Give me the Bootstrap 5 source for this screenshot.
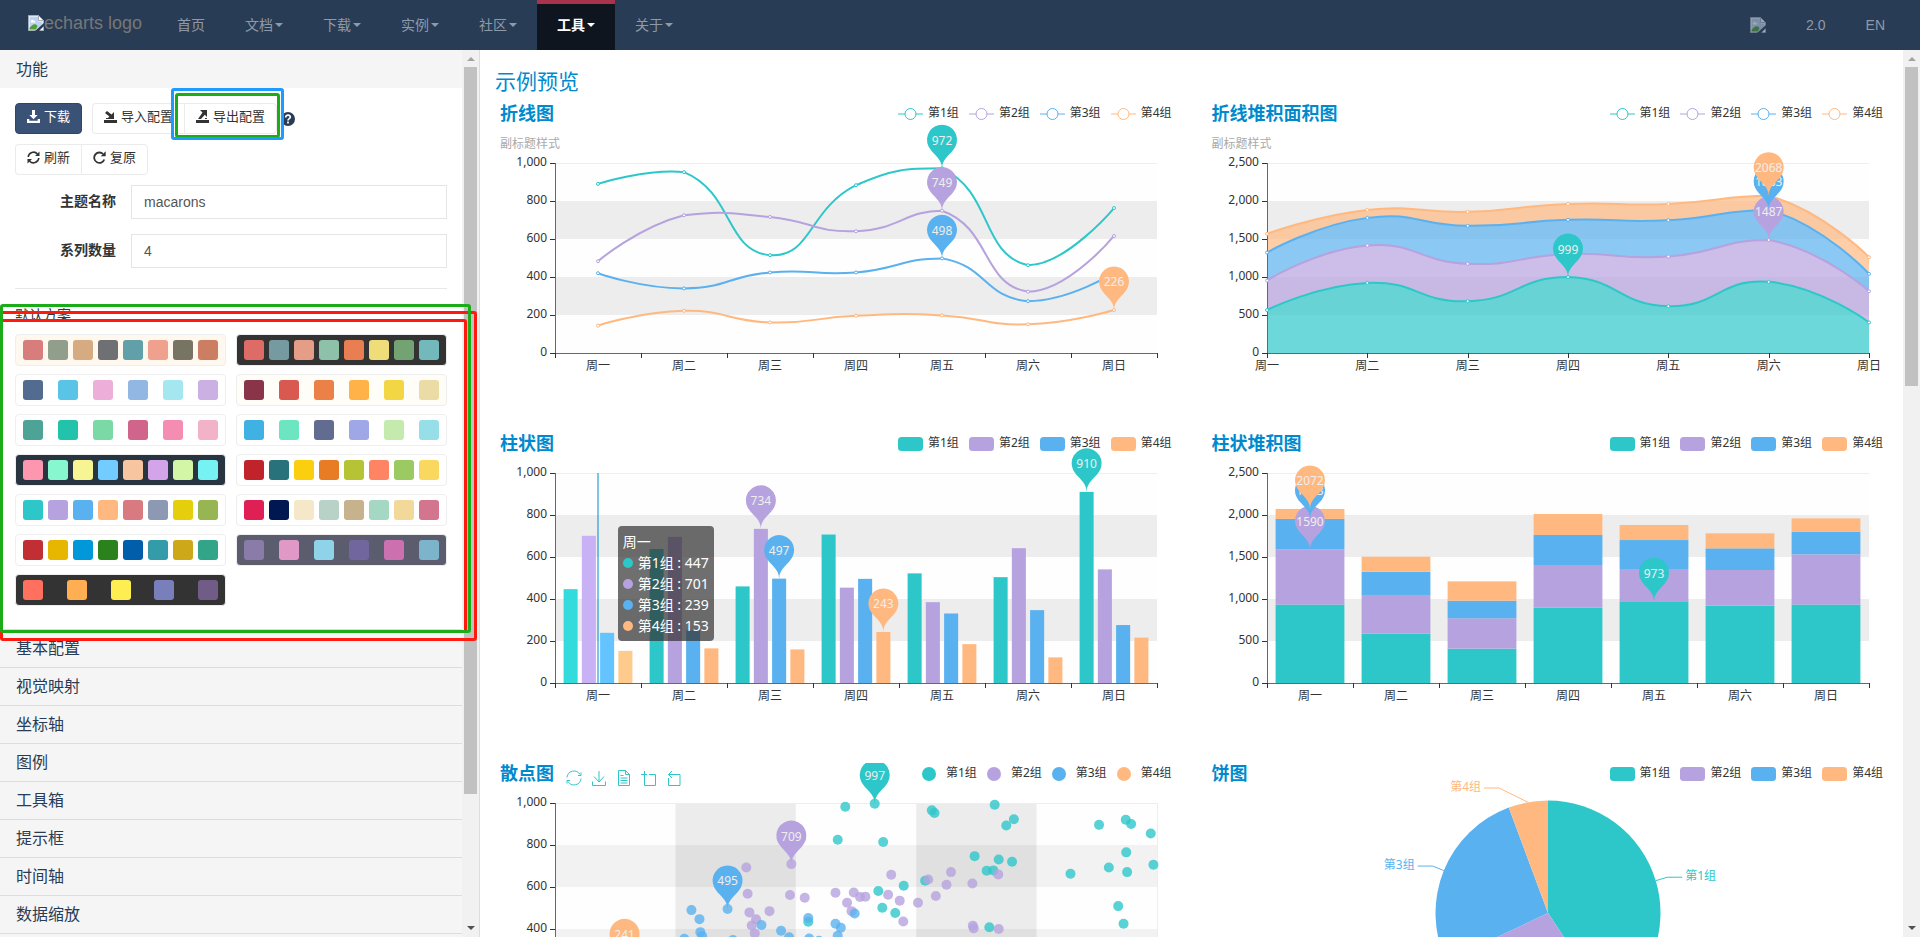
<!DOCTYPE html>
<html lang="zh-CN">
<head>
<meta charset="utf-8">
<meta name="viewport" content="width=device-width, initial-scale=1">
<title>主题编辑器 - ECharts</title>
<link href="https://cdn.jsdelivr.net/npm/bootstrap@5.3.0/dist/css/bootstrap.min.css" rel="stylesheet">
<style>
:root { --navy: #293c55; --accent: #008acd; --edge: #eee; }
body { font: 14px/20px "Liberation Sans", "Noto Sans CJK SC", sans-serif; color: #333; overflow: hidden; }
button, input { font: inherit; }

/* top bar */
.topbar { background: var(--navy); height: 50px; padding: 0 15px 0 28px; color: #777; }
.brand { font-size: 18px; line-height: 20px; color: #777; width: 129px; margin-top: -4px; }
.topbar .nav-link { color: #8f9aa8; padding: 15px 20px; line-height: 20px; height: 50px; display: flex; align-items: center; }
.topbar .nav-link.current { background: #0e151f; color: #fff; border-top: 4px solid #a9334c; padding: 11px 20px 15px; font-weight: bold; }
.tri::after { content: ""; border: 4px solid transparent; border-top-color: currentColor; border-bottom: 0; margin-left: 2px; }

/* left pane */
.work { min-height: 0; }
.side { width: 25%; border-right: 1px solid #ddd; }
.side-body { min-width: 0; overflow: hidden; }
.sect { background: #f5f5f5; color: var(--navy); font-size: 16px; line-height: 37px; padding: 0 16px; border: 0; border-bottom: 1px solid #ddd; text-align: left; height: 38px; flex: none; }
.sect-open { border-bottom: 0; padding-top: 1px; }
.panel { padding: 15px 15px 23px; border-bottom: 1px solid #ddd; }
.tool-row { gap: 10px; margin-bottom: 10px; }
.tool { font-size: 13px; line-height: 19px; height: 31px; padding: 0 11px 5px; border: 1px solid #ebebeb; background: #fff; color: #333; border-radius: 4px; display: inline-flex; align-items: center; gap: 4px; white-space: nowrap; }
.tool svg { width: 13px; height: 13px; }
.tool.main { background: #3a5276; border-color: #2f4566; color: #fff; }
.pair .tool:first-child { border-radius: 4px 0 0 4px; border-right: 0; }
.pair .tool:last-child { border-radius: 0 4px 4px 0; }
.field-row { gap: 15px; margin-bottom: 15px; }
.field-name { width: 101px; text-align: right; font-weight: bold; line-height: 32px; }
.field { height: 34px; border: 1px solid #e5e5e5; border-radius: 0; padding: 6px 12px; color: #555; }
.rule { border-top: 1px solid #e8e8e8; margin: 20px 0 16px; }
.scheme-name { margin-bottom: 9px; }
.schemes { display: grid; grid-template-columns: 1fr 1fr; gap: 8px 10px; }
.scheme { height: 32px; border: 1px solid var(--edge); border-radius: 4px; padding: 0 7px; display: flex; align-items: center; justify-content: space-between; background: #fff; }
.scheme i { width: 20px; height: 20px; border-radius: 3px; }

/* scroll rails */
.rail { width: 17px; flex: none; background: #f1f1f1; display: flex; flex-direction: column; align-items: center; }
.rail::before, .rail::after { content: ""; border: 4px solid transparent; flex: none; }
.rail::before { border-bottom-color: #a3a3a3; border-top: 0; margin: 7px 0 6px; }
.rail::after { border-top-color: #505050; border-bottom: 0; margin: auto 0 7px; }
.thumb { width: 13px; background: #c1c1c1; }
.thumb.long { height: 82%; }
.thumb.short { height: 36%; }

/* marker frames over the left pane */
.frame { position: absolute; border: 3px solid; border-radius: 3px; pointer-events: none; }
.f-blue { color: #1e9bff; left: 171px; top: 88px; width: 113px; height: 52px; }
.f-green { color: #1aad19; left: 175px; top: 93px; width: 105px; height: 45px; }
.f-list { color: #1aad19; left: 0; top: 304px; width: 471px; height: 329px; }
.f-red1 { color: #ff1a10; left: 0; top: 311px; width: 477px; height: 330px; }
.f-red2 { color: #ff1a10; left: 0; top: 319px; width: 467px; height: 314px; }

/* chart pane */
.stage { min-width: 0; overflow: hidden; }
.stage h1 { font-size: 21px; font-weight: 400; line-height: 22px; color: var(--accent); margin: 21px 15px 10px; }
.charts { --bs-gutter-x: 30px; margin: 0; }
.chart-box { font-family: "Noto Sans", "Noto Sans CJK SC", sans-serif; height: 300px; margin-bottom: 30px; position: relative; }
.chart-head { height: 40px; padding: 0 5px; display: flex; justify-content: space-between; align-items: flex-start; }
.chart-head.tall { height: 60px; }
.chart-head h2 { font-size: 18px; line-height: 20px; font-weight: bold; color: var(--accent); margin: 0 0 11px; }
.chart-head p { font-size: 12px; line-height: 20px; color: #aaa; margin: 0; }
.keys { display: flex; gap: 10px; font-size: 12px; line-height: 20px; margin: 0; padding: 0; list-style: none; }
.keys li { display: flex; gap: 5px; align-items: center; }
.keys svg { margin-top: 2px; }
.keys.dots li { gap: 10px; }
.chart-box > svg { display: block; width: 100%; overflow: visible; }
.chart-box text { font-size: 12px; }
.icons { color: #2ec7c9; gap: 9px; padding: 7px 0 0 12px; }
.icons button { border: 0; padding: 0; background: none; color: inherit; display: flex; }
.tip { position: absolute; left: 18%; top: 93px; background: rgba(50,50,50,.7); color: #fff; border-radius: 4px; padding: 5px; line-height: 21px; white-space: nowrap; }
.tip i { display: inline-block; width: 10px; height: 10px; border-radius: 50%; margin-right: 5px; }
</style>
</head>
<body class="vh-100 d-flex flex-column position-relative">

<nav class="topbar d-flex flex-shrink-0" aria-label="主导航">
  <a class="brand d-flex align-items-center text-decoration-none" href="#">
    <svg width="16" height="16" viewBox="0 0 16 16"><use href="#broken"/></svg><span>echarts logo</span></a>
  <ul class="nav flex-nowrap">
    <li><a class="nav-link" href="#">首页</a></li>
    <li><a class="nav-link tri" href="#">文档</a></li>
    <li><a class="nav-link tri" href="#">下载</a></li>
    <li><a class="nav-link tri" href="#">实例</a></li>
    <li><a class="nav-link tri" href="#">社区</a></li>
    <li><a class="nav-link tri current" href="#">工具</a></li>
    <li><a class="nav-link tri" href="#">关于</a></li>
  </ul>
  <ul class="nav flex-nowrap ms-auto">
    <li><a class="nav-link" href="#" aria-label="GitHub"><svg width="16" height="16" opacity=".55"><use href="#broken"/></svg></a></li>
    <li><a class="nav-link" href="#">2.0</a></li>
    <li><a class="nav-link" href="#">EN</a></li>
  </ul>
</nav>

<div class="work d-flex flex-grow-1">
  <aside class="side d-flex flex-shrink-0">
    <div class="side-body d-flex flex-column flex-grow-1">
      <button class="sect sect-open">功能</button>
      <div class="panel">
        <div class="tool-row d-flex align-items-center">
          <button class="tool main"><svg viewBox="0 0 13 13" fill="currentColor"><path d="M5 0h3v5h2.6L6.5 9.200 2.400 5H5zM0 9h2.300v1.800h8.400V9H13v4H0z"/></svg>下载</button>
          <div class="pair d-flex">
            <button class="tool"><svg viewBox="0 0 13 13" fill="currentColor"><path d="M0 10h13v3H0zM10 2v7H3l2.400-2.400L1 3l2-2 4.500 3.500zM2 8h2v1H2z"/></svg>导入配置</button>
            <button class="tool"><svg viewBox="0 0 13 13" fill="currentColor"><path d="M0 10h13v3H0zM4 0h7v7L8.800 4.800 5 9H2l4.500-6.500zM9 8h2v1H9z"/></svg>导出配置</button>
          </div>
          <svg width="14" height="14" viewBox="0 0 14 14" role="img" aria-label="帮助" style="margin-left:-6px"><circle cx="7" cy="7" r="7" fill="#293c55"/><path d="M4.700 5.500c0-3.300 4.800-3 4.600-.2C9.200 6.700 7 6.600 7 8.500M7 9.600v1.800" fill="none" stroke="#fff" stroke-width="1.700"/></svg>
        </div>
        <div class="tool-row pair d-flex gap-0">
          <button class="tool"><svg viewBox="0 0 13 13" fill="none" stroke="currentColor" stroke-width="1.600"><path d="M1.200 6A5.300 5.300 0 0 1 10.500 3M11.800 7A5.300 5.300 0 0 1 2.500 10"/><path d="M12.500.5v4.500H8zM.5 12.500V8H5z" fill="currentColor" stroke="none"/></svg>刷新</button>
          <button class="tool"><svg viewBox="0 0 13 13" fill="none" stroke="currentColor" stroke-width="1.800"><path d="M11.300 8.500A5.200 5.200 0 1 1 10 2.900"/><path d="M12.700.3v5H7.700z" fill="currentColor" stroke="none"/></svg>复原</button>
        </div>
        <div class="field-row d-flex">
          <label class="field-name flex-shrink-0" for="theme">主题名称</label>
          <input class="field flex-grow-1" id="theme" value="macarons" size="4">
        </div>
        <div class="field-row d-flex">
          <label class="field-name flex-shrink-0" for="count">系列数量</label>
          <input class="field flex-grow-1" id="count" value="4" size="4">
        </div>
        <div class="rule"></div>
        <div class="scheme-name">默认方案</div>
        <div class="schemes" id="schemes"></div>
      </div>
      <button class="sect">基本配置</button>
      <button class="sect">视觉映射</button>
      <button class="sect">坐标轴</button>
      <button class="sect">图例</button>
      <button class="sect">工具箱</button>
      <button class="sect">提示框</button>
      <button class="sect">时间轴</button>
      <button class="sect">数据缩放</button>
      <button class="sect" aria-label="更多"></button>
    </div>
    <div class="rail"><div class="thumb long"></div></div>
  </aside>

  <main class="stage flex-grow-1">
    <h1>示例预览</h1>
    <div class="row charts">
      <div class="col-6"><section class="chart-box" id="line">
        <div class="chart-head tall"><div><h2>折线图</h2><p>副标题样式</p></div><ul class="keys" data-kind="line"></ul></div>
      </section></div>
      <div class="col-6"><section class="chart-box" id="area">
        <div class="chart-head tall"><div><h2>折线堆积面积图</h2><p>副标题样式</p></div><ul class="keys" data-kind="line"></ul></div>
      </section></div>
      <div class="col-6"><section class="chart-box" id="bar">
        <div class="chart-head"><h2>柱状图</h2><ul class="keys" data-kind="rect"></ul></div>
      </section></div>
      <div class="col-6"><section class="chart-box" id="stack">
        <div class="chart-head"><h2>柱状堆积图</h2><ul class="keys" data-kind="rect"></ul></div>
      </section></div>
      <div class="col-6"><section class="chart-box overflow-hidden" id="scatter">
        <div class="chart-head"><div class="d-flex"><h2>散点图</h2>
          <div class="icons d-flex">
            <button aria-label="刷新"><svg width="16" height="16" viewBox="0 0 16 16" fill="none" stroke="currentColor"><path d="M1 7.500A7 7 0 0 1 14 4.500M15 8.500A7 7 0 0 1 2 11.500M15 2.500v3h-3M1 13.500v-3h3"/></svg></button>
            <button aria-label="保存为图片"><svg width="16" height="16" viewBox="0 0 16 16" fill="none" stroke="currentColor"><path d="M1.500 11.500v4h13v-4M8 1v11M3 6.500l5 5.500 5-5.500"/></svg></button>
            <button aria-label="数据视图"><svg width="16" height="16" viewBox="0 0 16 16" fill="none" stroke="currentColor"><path d="M2.500.5h7l4 4v11h-11zM9.500.5v4h4M4.500 5.500h3M4.500 8h7M4.500 10.500h7M4.500 13h7"/></svg></button>
            <button aria-label="区域缩放"><svg width="16" height="16" viewBox="0 0 16 16" fill="none" stroke="currentColor"><path d="M0 4.500h6M3.500 1v14.500h11v-11H8"/></svg></button>
            <button aria-label="区域还原"><svg width="16" height="16" viewBox="0 0 16 16" fill="none" stroke="currentColor"><path d="M6 1L2.500 4.500 6 8M2.500 4.500h11.500v11h-11.500V8"/></svg></button>
          </div></div><ul class="keys dots" data-kind="dot"></ul></div>
      </section></div>
      <div class="col-6"><section class="chart-box" id="pie">
        <div class="chart-head"><h2>饼图</h2><ul class="keys" data-kind="rect"></ul></div>
      </section></div>
    </div>
  </main>
  <div class="rail"><div class="thumb short"></div></div>
</div>

<div class="frame f-red1"></div><div class="frame f-red2"></div><div class="frame f-list"></div>
<div class="frame f-green"></div><div class="frame f-blue"></div>

<svg width="0" height="0" class="position-absolute"><symbol id="broken" viewBox="0 0 16 16">
  <path d="M.5.5h10l5 5v10H.5z" fill="#fff" stroke="#a7adb5"/><path d="M1.500 1.500h9v5h4v4L8 14.500H1.500z" fill="#bed3f1"/>
  <path d="M3 6.500c0-2 2-2 2.500-1 2 0 2 1.500 1.500 2H3z" fill="#fff"/><path d="M1.500 14.500V13c3-4 6-5 8-2L8 14.500z" fill="#4f9f36"/>
  <path d="M10.500.5v5h5z" fill="#fff" stroke="#a7adb5"/><path d="M16 8v3l-5 5H7z" fill="#293c55"/></symbol></svg>

<script src="https://cdn.jsdelivr.net/npm/bootstrap@5.3.0/dist/js/bootstrap.bundle.min.js"></script>
<script>
const C = ['#2ec7c9', '#b6a2de', '#5ab1ef', '#ffb980'];
const HOVER = ['#33dbdd', '#c9b1f5', '#64c4ff', '#ffcb8c'];
const DAYS = ['周一', '周二', '周三', '周四', '周五', '周六', '周日'];

// ---- palette list: background, then colours ----
const SCHEMES = [
  '#fef8ef #d87c7c #919e8b #d7ab82 #6e7074 #61a0a8 #efa18d #787464 #cc7e63',
  '#333 #dd6b66 #759aa0 #e69d87 #8dc1a9 #ea7e53 #eedd78 #73a373 #73b9bc',
  '#fff #516b91 #59c4e6 #edafda #93b7e3 #a5e7f0 #cbb0e3',
  '#fffdf8 #893448 #d95850 #eb8146 #ffb248 #f2d643 #ebdba4',
  '#fff #4ea397 #22c3aa #7bd9a5 #d0648a #f58db2 #f2b3c9',
  '#fff #3fb1e3 #6be6c1 #626c91 #a0a7e6 #c4ebad #96dee8',
  '#293441 #fc97af #87f7cf #f7f494 #72ccff #f7c5a0 #d4a4eb #d2f5a6 #76f2f2',
  '#fff #c1232b #27727b #fcce10 #e87c25 #b5c334 #fe8463 #9bca63 #fad860',
  '#fff #2ec7c9 #b6a2de #5ab1ef #ffb980 #d87a80 #8d98b3 #e5cf0d #97b552',
  '#fff #e01f54 #001852 #f5e8c8 #b8d2c7 #c6b38e #a4d8c2 #f3d999 #d3758f',
  '#fff #c12e34 #e6b600 #0098d9 #2b821d #005eaa #339ca8 #cda819 #32a487',
  '#5b5c6e #8a7ca8 #e098c7 #8fd3e8 #71669e #cc70af #7cb4cc',
  '#333 #ff715e #ffaf51 #ffee51 #797fba #715c87'];
document.getElementById('schemes').innerHTML = SCHEMES.map(s => {
  const [bg, ...cs] = s.split(' ');
  return `<div class="scheme" style="background:${bg}">` + cs.map(c => `<i style="background:${c}"></i>`).join('') + '</div>';
}).join('');

// ---- legends ----
const MARK = {
  line: c => `<svg width="25" height="14"><path d="M0 7h25" stroke="${c}"/><circle cx="12.500" cy="7" r="5.500" fill="#fff" stroke="${c}"/></svg>`,
  rect: c => `<svg width="25" height="14"><rect width="25" height="14" rx="3.500" fill="${c}"/></svg>`,
  dot: c => `<svg width="14" height="14"><circle cx="7" cy="7" r="7" fill="${c}"/></svg>`
};
document.querySelectorAll('.keys').forEach(u => u.innerHTML = C.map((c, i) => `<li>${MARK[u.dataset.kind](c)}第${i + 1}组</li>`).join(''));

// ---- drawing helpers ----
const L = 60, R = 20;
function pin(x, y, c, t) {
  const r = 15, h = 50, dy = r * r / (h - r), cy = y - h + r + dy, a = Math.asin(dy / r), dx = Math.cos(a) * r, s = Math.sin(a), k = Math.cos(a);
  return `<path fill="${c}" d="M${x - dx} ${cy + dy}A${r} ${r} 0 1 1 ${x + dx} ${cy + dy}C${x + dx - s * 9} ${cy + dy + k * 9} ${x} ${y - 10.5} ${x} ${y}C${x} ${y - 10.5} ${x - dx + s * 9} ${cy + dy + k * 9} ${x - dx} ${cy + dy}Z"/>` +
    `<text x="${x}" y="${cy + 5}" text-anchor="middle" fill="#eee">${t}</text>`;
}
function grid(W, H, cross) {
  let o = '', w = W - L - R;
  for (let i = 0; i < 5; i++) o += `<rect x="${L}" y="${H - (i + 1) * H / 5}" width="${w}" height="${H / 5}" fill="${i % 2 ? '#000' : '#888'}" fill-opacity="${i % 2 ? (cross ? .052 : .07) : .01}"/>`;
  if (cross) for (const i of [1, 3]) o += `<rect x="${L + i * w / 5}" y="0" width="${w / 5}" height="${H}" fill="#000" fill-opacity=".072"/>`;
  o += `<path d="M${L} .5h${w}" stroke="#eee"/>`;
  if (cross) o += `<path d="M${W - R + .5} 0v${H}" stroke="#eee"/>`;
  return o;
}
function axes(W, H, max, inset) {
  const w = W - L - R;
  let o = `<path d="M${L + .5} 0V${H}M${L} ${H + .5}H${W - R}" stroke="#008acd"/>`;
  for (let i = 0; i <= 5; i++) {
    const y = Math.round(H - i * H / 5);
    o += `<path d="M${L - 5} ${y + .5}h5" stroke="#333"/><text x="${L - 8}" y="${y + 3}" text-anchor="end" fill="#333">${(i * max / 5).toLocaleString('en-US')}</text>`;
  }
  const n = inset ? 7 : 6;
  for (let i = 0; i <= n; i++) o += `<path d="M${Math.round(L + i * w / n) + .5} ${H}v5" stroke="#333"/>`;
  DAYS.forEach((d, i) => o += `<text x="${L + (inset ? i + .5 : i) * w / n}" y="${H + 17}" text-anchor="middle" fill="#333">${d}</text>`);
  return o;
}
// smooth curve through the points, control points kept in the series' bounds
function curve(p) {
  const xs = p.map(q => q[0]), ys = p.map(q => q[1]);
  const cl = (q) => [Math.min(Math.max(q[0], Math.min(...xs)), Math.max(...xs)), Math.min(Math.max(q[1], Math.min(...ys)), Math.max(...ys))];
  let d = '', c0 = p[0];
  for (let i = 1; i < p.length; i++) {
    let c1 = p[i], nx = p[i];
    if (i < p.length - 1) {
      const a = p[i - 1], b = p[i], c = p[i + 1], v = [c[0] - a[0], c[1] - a[1]];
      const l1 = Math.hypot(b[0] - a[0], b[1] - a[1]), l2 = Math.hypot(c[0] - b[0], c[1] - b[1]), k = l2 / (l1 + l2);
      c1 = cl([b[0] - v[0] * .5 * (1 - k), b[1] - v[1] * .5 * (1 - k)]);
      nx = cl([b[0] + v[0] * .5 * k, b[1] + v[1] * .5 * k]);
    }
    d += `C${c0} ${c1} ${p[i]}`;
    c0 = nx;
  }
  return d;
}
// the same curve drawn right to left
function back(p) {
  const seg = curve(p).split('C').slice(1).map(s => s.split(' ').map(q => q.split(',').map(Number)));
  let d = '';
  for (let i = seg.length - 1; i >= 0; i--) d += `C${seg[i][1]} ${seg[i][0]} ${p[i]}`;
  return d;
}
function put(id, H, fn) {
  const box = document.getElementById(id), old = box.querySelector(':scope > svg');
  if (old) old.remove();
  const W = box.clientWidth;
  box.querySelector('.chart-head').insertAdjacentHTML('afterend', `<svg height="${H}" role="img">${fn(W)}</svg>`);
}

// ---- data ----
const LINE = [[890, 952, 515, 883, 972, 462, 763], [483, 725, 716, 641, 749, 323, 616], [420, 340, 424, 424, 498, 273, 423], [144, 222, 161, 196, 198, 151, 226]];
const AREA = [[565, 922, 682, 999, 616, 936, 402], [953, 1414, 1173, 1304, 1269, 1487, 813], [1322, 1778, 1673, 1752, 1747, 1883, 1041], [1568, 1883, 1857, 1962, 1962, 2068, 1261]];
const BAR = [[447, 638, 460, 707, 522, 504, 910], [701, 696, 734, 454, 385, 642, 541], [239, 251, 497, 496, 331, 347, 276], [153, 165, 160, 243, 185, 122, 216]];
const STACK = [[934, 587, 409, 897, 973, 921, 934], [1590, 1048, 770, 1405, 1357, 1345, 1532], [1953, 1325, 980, 1762, 1702, 1603, 1802], [2072, 1504, 1210, 2012, 1881, 1782, 1960]];
// scatter points on a 0-1350 by 0-1000 plane
const DOTS = [
  [[651,982],[717,997],[634,825],[736,814],[845,965],[851,952],[986,992],[1029,923],[1012,893],[941,747],[995,731],[1025,720],[968,677],[983,679],[830,630],[782,606],[725,581],[734,501],[763,476],[568,435],[974,408],[1220,896],[1280,920],[1292,900],[1336,855],[1281,765],[1242,693],[1283,671],[1342,706],[1156,663],[1263,509],[1275,425]],
  [[530,709],[429,693],[432,568],[436,479],[451,446],[441,417],[448,379],[481,485],[527,562],[560,549],[629,573],[655,525],[670,574],[684,552],[696,554],[665,485],[754,658],[747,563],[773,535],[781,436],[814,525],[854,557],[878,611],[888,671],[837,636],[936,617],[994,660],[937,416],[939,403],[995,400]],
  [[306,490],[387,495],[324,447],[326,385],[330,366],[290,353],[399,348],[463,419],[507,392],[525,361],[568,452],[570,355],[592,344],[629,425],[641,406],[634,368],[672,474]],
  [[156,241]]];

function draw() {
  put('line', 190, W => {
    const H = 190, w = W - L - R, P = LINE.map(s => s.map((v, i) => [L + (i + .5) * w / 7, H - v / 1000 * H]));
    let o = grid(W, H) + axes(W, H, 1000, true);
    P.forEach((p, k) => o += `<path d="M${p[0]}${curve(p)}" fill="none" stroke="${C[k]}" stroke-width="2"/>` + p.map(q => `<circle cx="${q[0]}" cy="${q[1]}" r="1.500" fill="#fff" stroke="${C[k]}"/>`).join(''));
    [[4, 972], [4, 749], [4, 498], [6, 226]].forEach(([i, t], k) => o += pin(...P[k][i], C[k], t));
    return o;
  });
  put('area', 190, W => {
    const H = 190, w = W - L - R, P = AREA.map(s => s.map((v, i) => [L + i * w / 6, H - v / 2500 * H]));
    let o = grid(W, H), pts = '';
    P.forEach((p, k) => {
      const base = k ? `L${P[k - 1][6]}${back(P[k - 1])}Z` : `V${H}H${L}Z`;
      o += `<path d="M${p[0]}${curve(p)}${base}" fill="${C[k]}" fill-opacity=".7"/>`;
      pts += `<path d="M${p[0]}${curve(p)}" fill="none" stroke="${C[k]}" stroke-width="2"/>` + p.map(q => `<circle cx="${q[0]}" cy="${q[1]}" r="1.500" fill="#fff" stroke="${C[k]}"/>`).join('');
    });
    o += axes(W, H, 2500, false) + pts;
    [[3, 999], [5, 1487], [5, 1883], [5, 2068]].forEach(([i, t], k) => o += pin(...P[k][i], C[k], t));
    return o;
  });
  put('bar', 210, W => {
    const H = 210, cw = (W - L - R) / 7, bw = cw * .8 / 4.9, X = (i, k) => L + (i + .1) * cw + k * bw * 1.3;
    let o = grid(W, H);
    BAR.forEach((s, k) => s.forEach((v, i) => o += `<rect x="${X(i, k)}" y="${H - v * .21}" width="${bw}" height="${v * .21}" fill="${i ? C[k] : HOVER[k]}"/>`));
    o += axes(W, H, 1000, true) + `<path d="M${Math.round(L + cw / 2)} 0V${H}" stroke="#008acd" stroke-opacity=".5" stroke-width="2"/>`;
    [[6, 910], [2, 734], [2, 497], [3, 243]].forEach(([i, t], k) => o += pin(X(i, k) + bw / 2, H - t * .21, C[k], t));
    return o;
  });
  put('stack', 210, W => {
    const H = 210, cw = (W - L - R) / 7, Y = v => H - v / 2500 * H;
    let o = grid(W, H);
    STACK.forEach((s, k) => s.forEach((v, i) => { const y0 = k ? Y(STACK[k - 1][i]) : H; o += `<rect x="${L + (i + .1) * cw}" y="${Y(v)}" width="${cw * .8}" height="${y0 - Y(v)}" fill="${C[k]}"/>`; }));
    o += axes(W, H, 2500, true);
    [[4, 973], [0, 1590], [0, 1953], [0, 2072]].forEach(([i, t], k) => o += pin(L + (i + .5) * cw, Y(t), C[k], t));
    return o;
  });
  put('scatter', 210, W => {
    const H = 210, w = W - L - R, X = v => L + v / 1350 * w, Y = v => H - v * .21;
    let o = grid(W, H, true) + axes(W, H, 1000, true);
    DOTS.forEach((s, k) => s.forEach(([x, y]) => o += `<circle cx="${X(x)}" cy="${Y(y)}" r="5" fill="${C[k]}" fill-opacity=".8"/>`));
    [[717, 997], [530, 709], [387, 495], [156, 241]].forEach(([x, t], k) => o += pin(X(x), Y(t), C[k], t));
    return o;
  });
  put('pie', 260, W => {
    const cx = W / 2, cy = 110, r = 112.5, A = [0, 146.6, 244.7, 339.6, 360];
    const at = (a, q) => [cx + q * Math.sin(a * Math.PI / 180), cy - q * Math.cos(a * Math.PI / 180)];
    let o = '';
    C.forEach((c, k) => {
      o += `<path fill="${c}" d="M${cx} ${cy}L${at(A[k], r)}A${r} ${r} 0 0 1 ${at(A[k + 1], r)}Z"/>`;
      const m = (A[k] + A[k + 1]) / 2, s = m < 180 ? 1 : -1, [x, y] = at(m, r), [ex, ey] = k == 3 ? [cx - 49, cy - 125] : at(m, r + 12);
      o += `<path d="M${x} ${y}L${ex} ${ey}h${s * 15}" fill="none" stroke="${c}"/><text x="${ex + s * 18}" y="${ey + 3}" text-anchor="${s > 0 ? 'start' : 'end'}" fill="${c}">第${k + 1}组</text>`;
    });
    return o;
  });
}
draw();
addEventListener('resize', draw);

document.getElementById('bar').insertAdjacentHTML('beforeend', '<div class="tip">周一' + BAR.map((s, k) => `<br><i style="background:${C[k]}"></i>第${k + 1}组 : ${s[0]}`).join('') + '</div>');
</script>
</body>
</html>
